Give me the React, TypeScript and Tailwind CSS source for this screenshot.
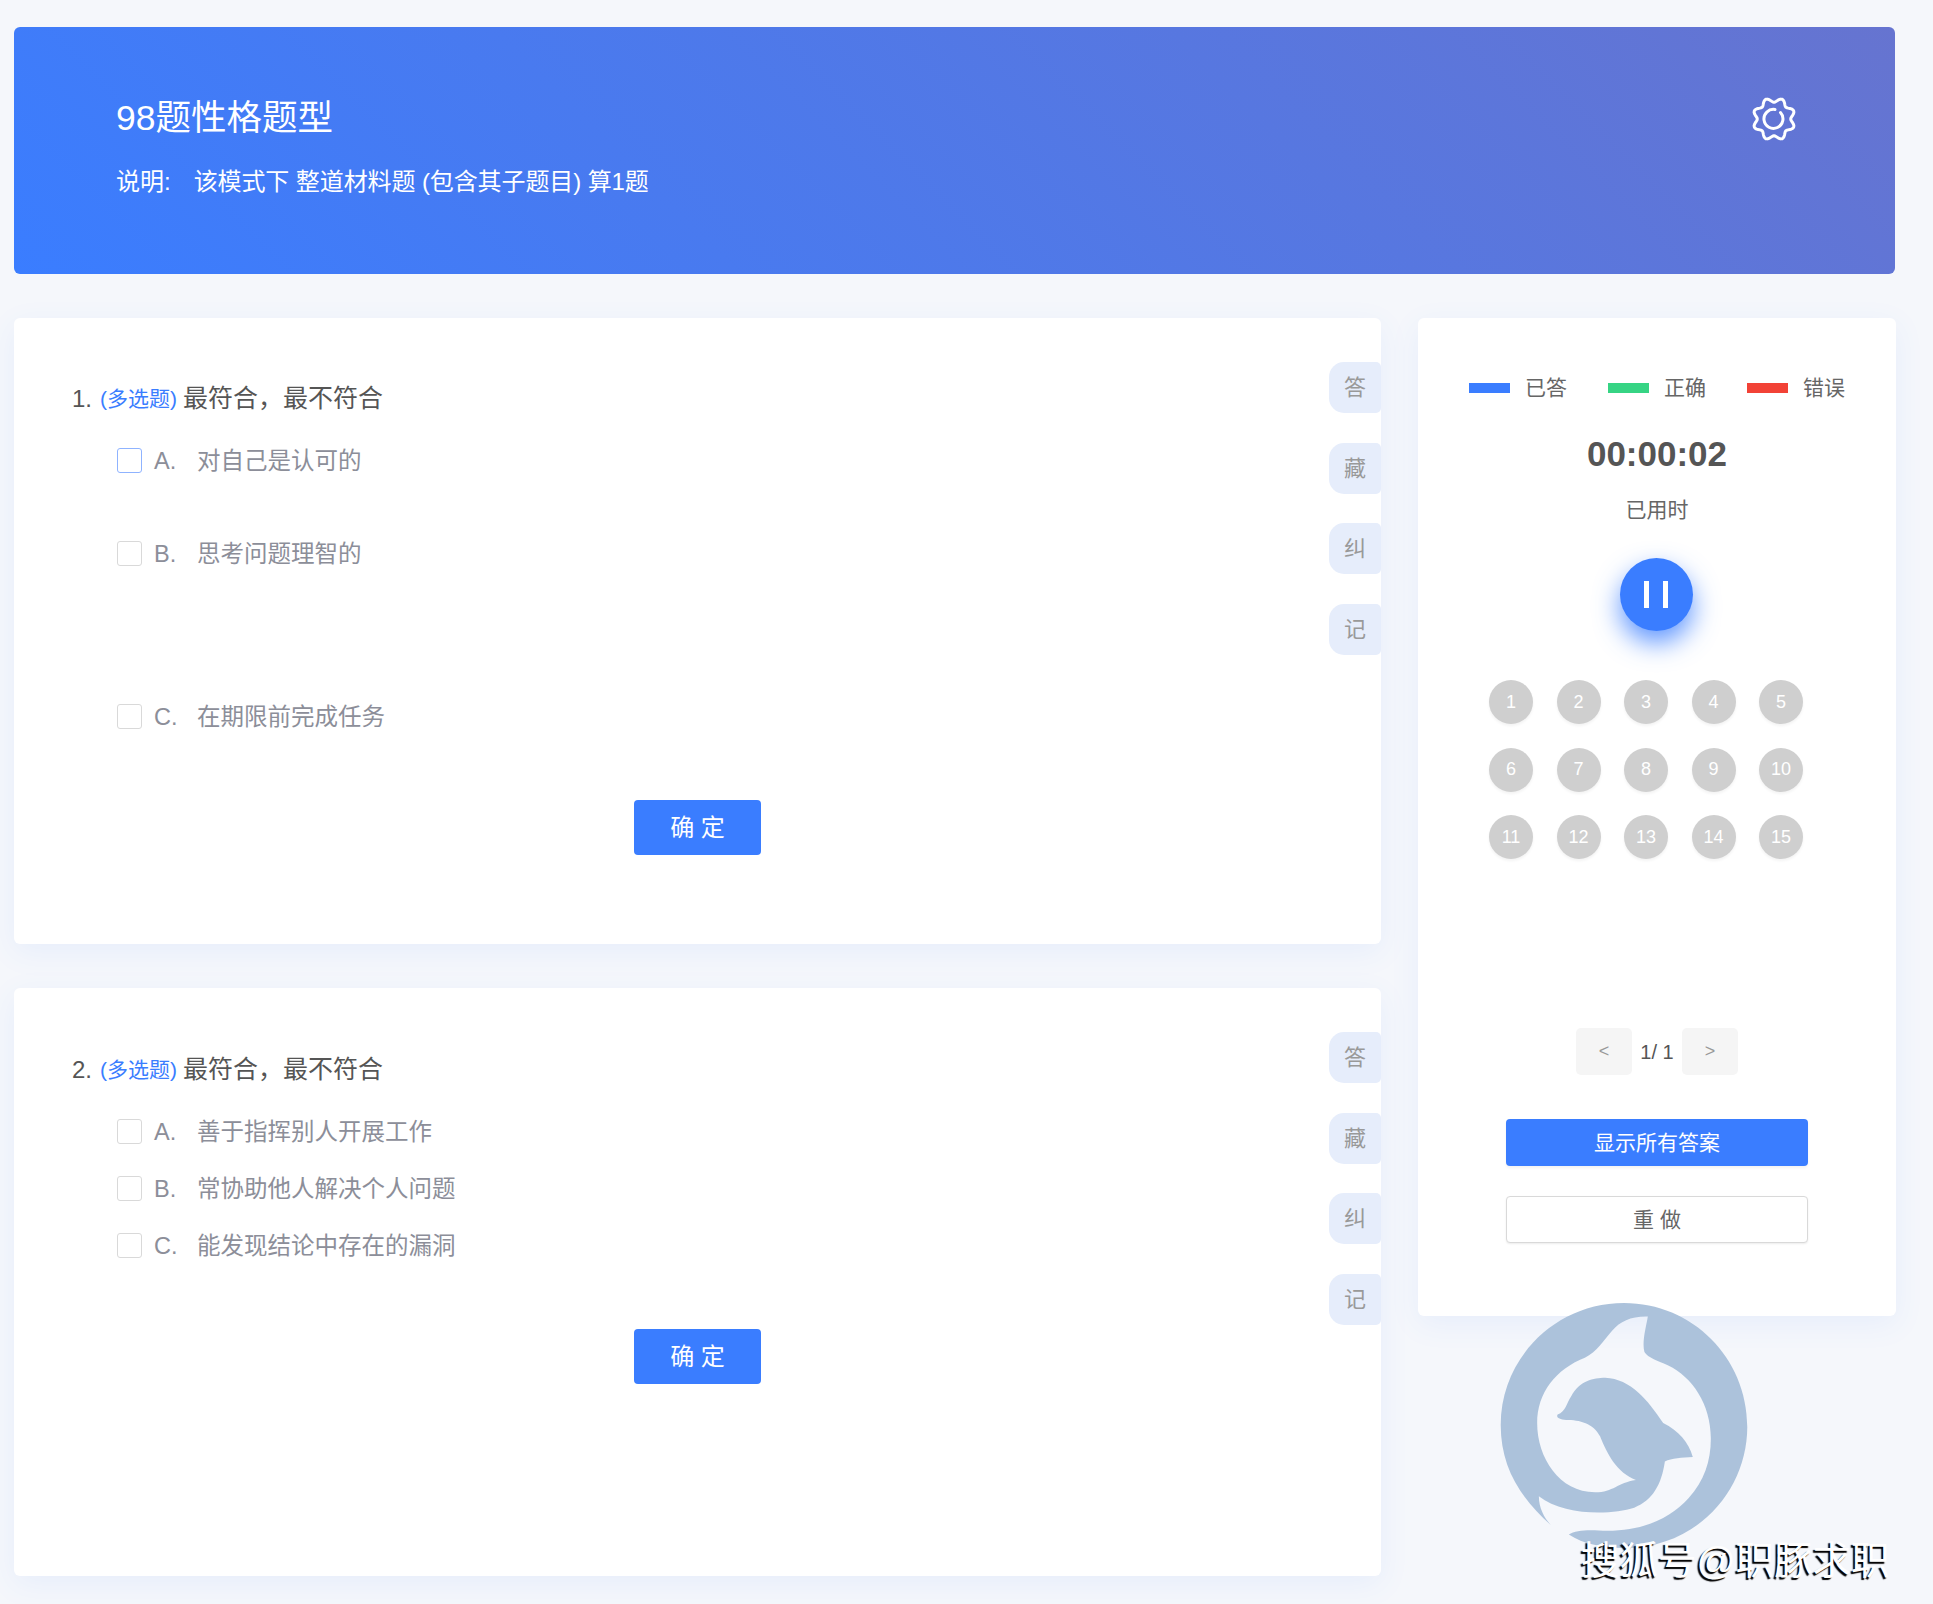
const FONT = "font-['Liberation_Sans','Noto_Sans_CJK_SC',sans-serif]";

const gearPath = (() => {
  const pts: string[] = [];
  const steps = 96;
  for (let i = 0; i < steps; i++) {
    const a = (i / steps) * Math.PI * 2;
    const r = 19 + 2.3 * Math.cos(8 * (a - Math.PI / 8));
    const x = 24 + r * Math.sin(a);
    const y = 24 - r * Math.cos(a);
    pts.push(`${x.toFixed(2)} ${y.toFixed(2)}`);
  }
  return `M${pts.join("L")}Z`;
})();

function GearIcon() {
  return (
    <svg className="-mt-[1px]" width="48" height="48" viewBox="0 0 48 48" fill="none" stroke="white" strokeWidth="3" strokeLinejoin="round" strokeLinecap="round">
      <path d={gearPath} />
      <path d="M30.5 17.5A9.5 9.5 0 1 1 25 14.5" />
    </svg>
  );
}

function DolphinMark() {
  return (
    <svg
      className="absolute left-[1498px] top-[1300px] w-[252px] h-[250px]"
      viewBox="290 780 740 650"
      preserveAspectRatio="none"
    >
      <path
        fill="#a9c0da"
        fillOpacity="0.96"
        d="M445 1365C350 1290 298 1210 298 1105C298 930 460 788 660 788C860 788 1022 930 1022 1110C1022 1270 880 1425 660 1425C600 1425 540 1415 498 1390C520 1375 570 1378 610 1380C720 1380 800 1345 850 1295C895 1250 915 1200 915 1140C915 1050 860 980 790 950C760 938 730 930 720 915C712 890 725 850 730 823C680 822 650 835 625 860C600 885 580 915 545 930C460 960 405 1020 405 1100C405 1190 470 1280 575 1280C630 1280 640 1255 695 1248C640 1230 610 1180 590 1135C570 1100 530 1092 490 1092C470 1090 460 1085 465 1078C490 1068 490 1050 505 1030C530 990 570 982 605 982C680 985 730 1040 775 1100C820 1120 850 1150 862 1188C830 1190 800 1190 780 1200C770 1260 745 1300 690 1320C620 1340 480 1340 410 1290C410 1320 425 1345 445 1365Z"
      />
    </svg>
  );
}

interface OptionItem {
  label: string;
  text: string;
  gap: string;
  active?: boolean;
}

function QuestionCard({
  num,
  options,
  cardClass,
  titleTop,
  buttonTop,
}: Readonly<{ num: number; options: OptionItem[]; cardClass: string; titleTop: string; buttonTop: string }>) {
  return (
    <div className={`flex bg-white rounded-[6px] shadow-[0_8px_30px_rgba(58,125,255,0.08)] ${cardClass}`}>
      <div className="flex-1 flex flex-col">
        <div className={`flex items-center h-[36px] pl-[58px] ${titleTop}`}>
          <span className="text-[24px] text-[#555]">{num}.</span>
          <span className="text-[21px] text-[#3a7dff] ml-[8px]">(多选题)</span>
          <span className="text-[25px] text-[#555] ml-[6px]">{"最符合\uFF0C最不符合"}</span>
        </div>
        <div className="flex flex-col pl-[103px] mt-[28px]">
          {options.map((o) => (
            <div key={o.label} className={`flex items-center h-[30px] text-[23.5px] text-[#8c8e99] ${o.gap}`}>
              <span
                className={`w-[25px] h-[25px] rounded-[3px] border bg-white ${o.active ? "border-[#8fb3ff]" : "border-[#d9d9d9]"}`}
              />
              <span className="w-[43px] ml-[12px] pt-[4px]">{o.label}</span>
              <span className="pt-[4px]">{o.text}</span>
            </div>
          ))}
        </div>
        <div className={`flex justify-center pl-[52px] ${buttonTop}`}>
          <button className="w-[127px] h-[55px] rounded-[4px] bg-[#3a7dff] text-white text-[24px]">确 定</button>
        </div>
      </div>
      <div className="w-[52px] flex flex-col gap-[29.6px] pt-[44px]">
        {["答", "藏", "纠", "记"].map((t) => (
          <div
            key={t}
            className="h-[51px] flex items-center justify-center rounded-l-[15px] rounded-r-[5px] bg-[#e6edfb] text-[#999] text-[22px]"
          >
            {t}
          </div>
        ))}
      </div>
    </div>
  );
}

function LegendItem({ color, label }: Readonly<{ color: string; label: string }>) {
  return (
    <div className="flex items-center gap-[15px]">
      <span className={`w-[41px] h-[10px] ${color}`} />
      <span className="text-[21px] text-[#666] w-[42px]">{label}</span>
    </div>
  );
}

function SidePanel() {
  return (
    <div className="w-[478px] h-[998px] bg-white rounded-[6px] shadow-[0_8px_30px_rgba(58,125,255,0.08)] pt-[57px] flex flex-col items-center">
      <div className="flex items-center gap-[41px] h-[26px]">
        <LegendItem color="bg-[#3a7dff]" label="已答" />
        <LegendItem color="bg-[#36d484]" label="正确" />
        <LegendItem color="bg-[#f24236]" label="错误" />
      </div>
      <div className="mt-[32px] h-[42px] leading-[42px] text-[35px] font-bold text-[#555]">00:00:02</div>
      <div className="mt-[21px] h-[28px] leading-[28px] text-[21px] text-[#666]">已用时</div>
      <div className="mt-[34px] mr-[2px] w-[73px] h-[73px] rounded-full bg-[#3a7dff] flex items-center justify-center gap-[14px] shadow-[0_12px_26px_rgba(58,125,255,0.8)]">
        <span className="w-[5px] h-[27px] bg-white" />
        <span className="w-[5px] h-[27px] bg-white" />
      </div>
      <div className="mt-[49px] self-start ml-[71px] grid grid-cols-[repeat(5,44px)] gap-[23.5px]">
        {Array.from({ length: 15 }, (_, i) => (
          <div
            key={i}
            className="w-[44px] h-[44px] rounded-full bg-[#cfcfcf] text-white text-[18px] flex items-center justify-center shadow-[0_2px_3px_rgba(0,0,0,0.05)]"
          >
            {i + 1}
          </div>
        ))}
      </div>
      <div className="mt-[169px] flex items-center">
        <div className="w-[56px] h-[47px] rounded-[5px] bg-[#f5f5f5] text-[#999] text-[18px] flex items-center justify-center">&lt;</div>
        <div className="w-[50px] text-center text-[20px] text-[#555] whitespace-pre">1/ 1</div>
        <div className="w-[56px] h-[47px] rounded-[5px] bg-[#f5f5f5] text-[#999] text-[18px] flex items-center justify-center">&gt;</div>
      </div>
      <button className="mt-[44px] w-[302px] h-[47px] rounded-[4px] bg-[#3a7dff] text-white text-[21px] shadow-[0_2px_3px_rgba(0,0,0,0.05)]">
        显示所有答案
      </button>
      <button className="mt-[30px] w-[302px] h-[47px] rounded-[4px] bg-white border border-[#d9d9d9] text-[#666] text-[21px] shadow-[0_1px_2px_rgba(0,0,0,0.08)]">
        重 做
      </button>
    </div>
  );
}

export default function App() {
  return (
    <div className={`relative w-[1933px] h-[1604px] overflow-hidden bg-[#f5f7fb] pl-[14px] pt-[27px] ${FONT}`}>
      <div className="w-[1881px] h-[247px] rounded-[6px] bg-[linear-gradient(45deg,#3a7dff,#6674d0)] pl-[102px] pr-[97px] pt-[69px] flex items-start justify-between text-white">
        <div className="flex flex-col">
          <div className="text-[35.5px] leading-[44px]">98题性格题型</div>
          <div className="text-[24px] leading-[32px] mt-[26px] whitespace-pre">
            说明:<span className="ml-[23px] tracking-[-0.1px]">该模式下 整道材料题 (包含其子题目) 算1题</span>
          </div>
        </div>
        <GearIcon />
      </div>
      <div className="mt-[44px] flex gap-[37px] items-start">
        <div className="w-[1367px] flex flex-col gap-[44px]">
          <QuestionCard
            num={1}
            cardClass="h-[626px]"
            titleTop="mt-[63px]"
            buttonTop="mt-[69px]"
            options={[
              { label: "A.", text: "对自己是认可的", gap: "", active: true },
              { label: "B.", text: "思考问题理智的", gap: "mt-[63px]" },
              { label: "C.", text: "在期限前完成任务", gap: "mt-[133px]" },
            ]}
          />
          <QuestionCard
            num={2}
            cardClass="h-[588px]"
            titleTop="mt-[64px]"
            buttonTop="mt-[69px]"
            options={[
              { label: "A.", text: "善于指挥别人开展工作", gap: "" },
              { label: "B.", text: "常协助他人解决个人问题", gap: "mt-[27px]" },
              { label: "C.", text: "能发现结论中存在的漏洞", gap: "mt-[27px]" },
            ]}
          />
        </div>
        <SidePanel />
      </div>
      <DolphinMark />
      <div className="absolute left-[1581px] top-[1538px] text-[38.5px] leading-[46px] text-white whitespace-nowrap [text-shadow:-2px_2px_1px_#000]">
        搜狐号@职豚求职
      </div>
    </div>
  );
}
